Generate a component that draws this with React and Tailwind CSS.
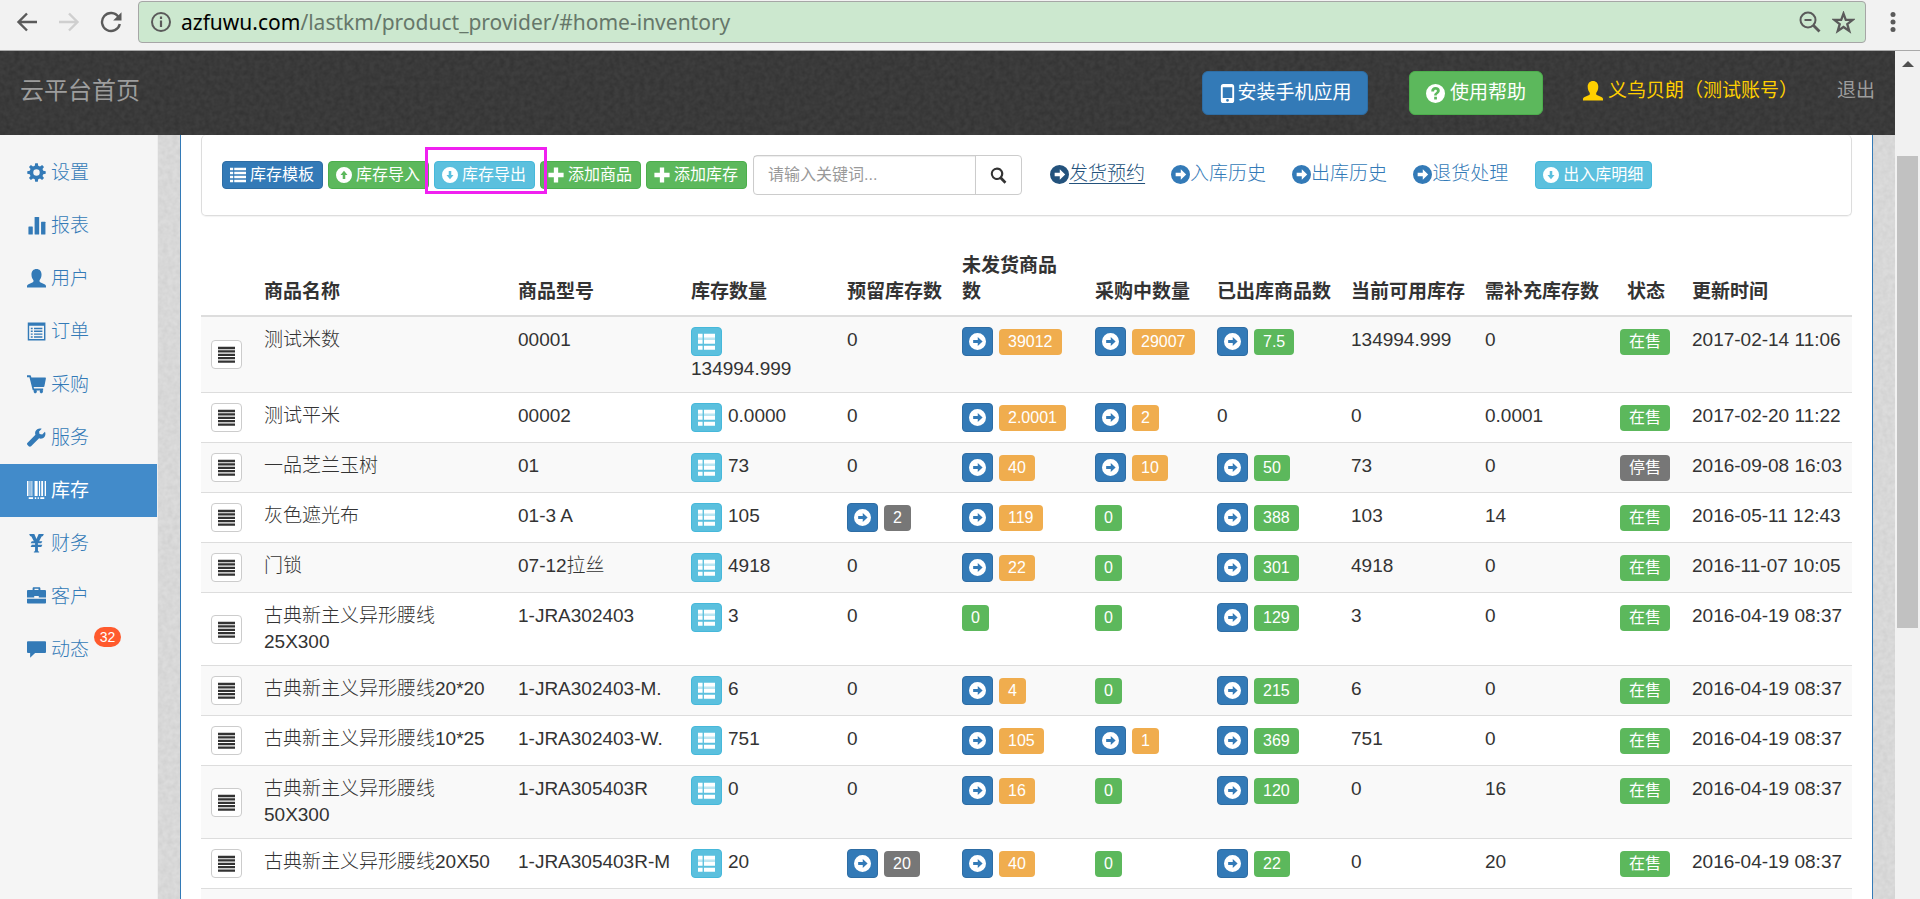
import { clsx } from 'clsx';

const glyphs = {
    cog: (
        <path
            fillRule="evenodd"
            d="M8.6 0.3h2.800l.4 2.600 1.900.8 2.200-1.600 2 2-1.600 2.200.8 1.900 2.600.4v2.800l-2.600.4-.8 1.900 1.600 2.200-2 2-2.200-1.600-1.900.8-.4 2.600H8.600l-.4-2.600-1.900-.8-2.200 1.600-2-2 1.600-2.200-.8-1.900L.3 11.400V8.600l2.600-.4.8-1.900L2.100 4.100l2-2 2.200 1.600 1.900-.8zM10 6.600a3.400 3.400 0 1 0 0 6.800 3.400 3.400 0 0 0 0-6.800z"
        />
    ),
    stats: (
        <>
            <rect x="1.500" y="11" width="4.600" height="8.500" rx=".6" />
            <rect x="8" y="1" width="4.800" height="18.500" rx=".6" />
            <rect x="14.800" y="6" width="4.600" height="13.500" rx=".6" />
        </>
    ),
    user: (
        <path d="M10 0c3.200 0 5.300 2.300 5.300 5.800 0 2.500-.8 4.600-2.100 6.100v1c0 .7.4 1 1.200 1.400l4 1.800c1.200.6 1.600 1.200 1.600 2.200v1.200H0v-1.200c0-1 .4-1.600 1.600-2.200l4-1.800c.8-.4 1.200-.7 1.200-1.400v-1C5.500 10.400 4.700 8.300 4.700 5.800 4.700 2.300 6.800 0 10 0z" />
    ),
    listAlt: (
        <>
            <path fillRule="evenodd" d="M.8.600h18.600v18.800H.800zM2.300 4v13.900h15.600V4z" />
            <path d="M4 6h2v1.500H4zM7.400 6h8.800v1.500H7.400zM4 9h2v1.500H4zM7.400 9h8.800v1.500H7.400zM4 12h2v1.500H4zM7.400 12h8.800v1.500H7.400zM4 15h2v1.500H4zM7.400 15h8.800v1.500H7.400z" />
        </>
    ),
    cart: (
        <path d="M0 .3h3.300c.5 0 .8.3.9.800l.4 1.600h14.600c.5 0 .8.400.7.900l-1.600 8.200c-.1.500-.4.700-.9.700H7l.4 1.800H17v2h-.6a1.700 1.700 0 1 1-2.600 0H10a1.700 1.700 0 1 1-2.600 0h-.6c-.5 0-.8-.3-.9-.8L2.600 2.300H0z" />
    ),
    wrench: (
        <path d="M18.900 3.900l-2.900 2.900-2.800-.5-.5-2.600L15.500.800C12.900-.100 10 .900 8.900 3.500c-.5 1.300-.5 2.600 0 3.700L.600 15.500a1.800 1.800 0 0 0 0 2.500l1.200 1.200c.7.700 1.800.700 2.500 0l8.400-8.300c1.300.5 2.700.4 4-.2 2.500-1.200 3.300-4.300 2.200-6.800z" />
    ),
    barcode: (
        <path d="M0 0h1.600v15.800H0zM2.700 0h.9v15.800h-.9zM4.700 0h.9v15.800h-.9zM8 0h3.200v15.800H8zM12.600 0h1.200v15.800h-1.200zM15 0h1.900v15.800H15zM18.600 0H20v15.800h-1.400zM1.800 17.200h4.600V19H1.800zM8.200 17.200h1.500V19H8.200zM11.200 17.200h1.300V19h-1.300zM14 17.200h4.200V19H14z" />
    ),
    yen: (
        <path d="M2.300 0h5.400L10 5.200 12.300 0h5.400l-.9 2.200-1.400.5-2.600 4.800h3.400l-1.200 2.200h-3.500v1.700h4.700l-1.200 2.200h-3.500V17c0 1 .4 1.300 1.300 1.600v.9H7.200v-.9c.9-.3 1.300-.6 1.300-1.600v-3.400H3.800L5 11.400h3.500V9.700H3.800L5 7.500h2.200L4.600 2.700l-1.400-.5z" />
    ),
    briefcase: (
        <path
            fillRule="evenodd"
            d="M7.200.300h5.600c.8 0 1.300.5 1.300 1.200v1.600h4.700c.7 0 1.200.5 1.200 1.200v6.700h-7.600V9.400H7.600V11H0V4.300c0-.7.5-1.200 1.200-1.200h4.700V1.500c0-.7.5-1.200 1.300-1.200zM7.900 1.800v1.300h4.200V1.800zM0 12.400h20v3.800c0 .7-.5 1.200-1.200 1.200H1.200c-.7 0-1.200-.5-1.200-1.200z"
        />
    ),
    comment: (
        <path d="M1 1.200h18c.6 0 1 .4 1 1v10.500c0 .6-.4 1-1 1H8.500L3.300 18.800v-5.100H1c-.6 0-1-.4-1-1V2.200c0-.6.4-1 1-1z" />
    ),
    phone: (
        <path
            fillRule="evenodd"
            d="M5.500 0h9c1.500 0 2.500 1 2.500 2.500v15c0 1.500-1 2.500-2.500 2.500h-9C4 20 3 19 3 17.500v-15C3 1 4 0 5.500 0zM5 3.500v11.200h10V3.500zm5 12.200a1.500 1.500 0 1 0 0 3 1.500 1.500 0 0 0 0-3z"
        />
    ),
    question: (
        <path
            fillRule="evenodd"
            d="M10 0a10 10 0 1 1 0 20 10 10 0 0 1 0-20zM8.600 13.400v3h2.900v-3zM5.500 7.900h3c0-1.200.5-1.900 1.500-1.900s1.500.5 1.500 1.200c0 .8-.4 1.200-1.200 1.700-1.300.9-1.700 1.700-1.700 3.300h2.700c0-1 .4-1.400 1.300-2 1.300-.9 1.900-1.800 1.900-3.300 0-2.300-1.700-3.700-4.400-3.700-2.800 0-4.600 1.700-4.600 4.700z"
        />
    ),
    right: (
        <path
            fillRule="evenodd"
            d="M10 0a10 10 0 1 1 0 20 10 10 0 0 1 0-20zM10.300 4.600v3.500H4.900v3.800h5.400v3.500L16 10z"
        />
    ),
    down: (
        <path
            fillRule="evenodd"
            d="M10 0a10 10 0 1 1 0 20 10 10 0 0 1 0-20zM8.400 4.900v5H5.600L10 15.400l4.400-5.500h-2.800v-5z"
        />
    ),
    up: (
        <path
            fillRule="evenodd"
            d="M10 0a10 10 0 1 1 0 20 10 10 0 0 1 0-20zM8.400 15.100v-5H5.600L10 4.600l4.400 5.500h-2.800v5z"
        />
    ),
    plus: <path d="M7.300.500h5.400v6.800h6.800v5.400h-6.800v6.800H7.300v-6.800H.500V7.300h6.800z" />,
    list: (
        <path d="M0 1h4v3.200H0zM5.300 1H20v3.200H5.300zM0 6h4v3.200H0zM5.300 6H20v3.200H5.300zM0 11h4v3.200H0zM5.300 11H20v3.200H5.300zM0 16h4v3.200H0zM5.300 16H20v3.200H5.300z" />
    ),
    thList: (
        <>
            <path d="M0 1h5.400v4.600H0zM7 1h13v4.600H7zM0 8h5.400v4.600H0zM7 8h13v4.600H7zM0 15h5.400v4.600H0zM7 15h13v4.600H7z" />
            <path d="M0 5.600h5.400V8H0zM7 5.600h13V8H7z" opacity=".6" />
        </>
    ),
    justify: (
        <path d="M0 1h20v2.700H0zM0 5h20v2.700H0zM0 9h20v2.700H0zM0 13h20v2.700H0zM0 17h20v2.700H0z" />
    ),
    search: (
        <path
            fillRule="evenodd"
            d="M8.200.5a7.400 7.400 0 0 1 6.100 11.600l5 5.300-2.200 2.200-5.200-5.200A7.400 7.400 0 1 1 8.200.500zm0 2.600a4.900 4.900 0 1 0 0 9.800 4.900 4.900 0 0 0 0-9.800z"
        />
    ),
};

const Glyph = ({ name, className }) => (
    <svg viewBox="0 0 20 20" fill="currentColor" aria-hidden="true" className={clsx('shrink-0', className)}>
        {glyphs[name]}
    </svg>
);

const menu = [
    { icon: 'cog', label: '设置' },
    { icon: 'stats', label: '报表' },
    { icon: 'user', label: '用户' },
    { icon: 'listAlt', label: '订单' },
    { icon: 'cart', label: '采购' },
    { icon: 'wrench', label: '服务' },
    { icon: 'barcode', label: '库存', active: true },
    { icon: 'yen', label: '财务' },
    { icon: 'briefcase', label: '客户' },
    { icon: 'comment', label: '动态', count: 32 },
];

const columns = [
    { label: '', width: 'w-[53px]' },
    { label: '商品名称', width: 'w-[254px]' },
    { label: '商品型号', width: 'w-[173px]' },
    { label: '库存数量', width: 'w-[156px]' },
    { label: '预留库存数', width: 'w-[115px]' },
    { label: '未发货商品数', width: 'w-[133px]' },
    { label: '采购中数量', width: 'w-[122px]' },
    { label: '已出库商品数', width: 'w-[134px]' },
    { label: '当前可用库存', width: 'w-[134px]' },
    { label: '需补充库存数', width: 'w-[135px]' },
    { label: '状态', width: 'w-[72px]', center: true },
    { label: '更新时间', width: 'w-[170px]' },
];

const rows = [
    { name: '测试米数', model: '00001', stock: '134994.999', reserved: 0, unsent: '39012', buying: '29007', sent: '7.5', usable: '134994.999', need: '0', onSale: true, time: '2017-02-14 11:06' },
    { name: '测试平米', model: '00002', stock: '0.0000', reserved: 0, unsent: '2.0001', buying: '2', sent: null, usable: '0', need: '0.0001', onSale: true, time: '2017-02-20 11:22' },
    { name: '一品芝兰玉树', model: '01', stock: '73', reserved: 0, unsent: '40', buying: '10', sent: '50', usable: '73', need: '0', onSale: false, time: '2016-09-08 16:03' },
    { name: '灰色遮光布', model: '01-3 A', stock: '105', reserved: 2, unsent: '119', buying: '0', sent: '388', usable: '103', need: '14', onSale: true, time: '2016-05-11 12:43' },
    { name: '门锁', model: '07-12拉丝', stock: '4918', reserved: 0, unsent: '22', buying: '0', sent: '301', usable: '4918', need: '0', onSale: true, time: '2016-11-07 10:05' },
    { name: '古典新主义异形腰线25X300', model: '1-JRA302403', stock: '3', reserved: 0, unsent: '0', buying: '0', sent: '129', usable: '3', need: '0', onSale: true, time: '2016-04-19 08:37' },
    { name: '古典新主义异形腰线20*20', model: '1-JRA302403-M.', stock: '6', reserved: 0, unsent: '4', buying: '0', sent: '215', usable: '6', need: '0', onSale: true, time: '2016-04-19 08:37' },
    { name: '古典新主义异形腰线10*25', model: '1-JRA302403-W.', stock: '751', reserved: 0, unsent: '105', buying: '1', sent: '369', usable: '751', need: '0', onSale: true, time: '2016-04-19 08:37' },
    { name: '古典新主义异形腰线50X300', model: '1-JRA305403R', stock: '0', reserved: 0, unsent: '16', buying: '0', sent: '120', usable: '0', need: '16', onSale: true, time: '2016-04-19 08:37' },
    { name: '古典新主义异形腰线20X50', model: '1-JRA305403R-M', stock: '20', reserved: 20, unsent: '40', buying: '0', sent: '22', usable: '0', need: '20', onSale: true, time: '2016-04-19 08:37' },
];

// Paper grain behind the header and the page gutters
const Grain = ({ id, dark }) => (
    <svg className="absolute inset-0 size-full" aria-hidden="true">
        <filter id={id} x="0" y="0" width="100%" height="100%">
            <feTurbulence type="fractalNoise" baseFrequency="0.2" numOctaves="2" seed="4" />
            <feColorMatrix values={dark ? '0 0 0 0 0  0 0 0 0 0  0 0 0 0 0  0.3 0 0 0 -0.08' : '0 0 0 0 0  0 0 0 0 0  0 0 0 0 0  0.08 0 0 0 -0.02'} />
        </filter>
        <rect width="100%" height="100%" filter={`url(#${id})`} />
    </svg>
);

const BrowserBar = () => (
    <div className="flex h-[51px] shrink-0 items-start border-b border-[#a9a9a9] bg-[#f2f2f2] pt-px text-[#5a5a5a]">
        <div className="flex h-[42px] w-[138px] shrink-0 items-center justify-between pr-4 pl-4">
            <button type="button" aria-label="后退">
                <svg viewBox="0 0 22 22" className="size-[22px]" fill="none" stroke="currentColor" strokeWidth="2.400">
                    <path d="M21 11H3M11 2.500L2.500 11l8.500 8.500" />
                </svg>
            </button>
            <button type="button" aria-label="前进" className="text-[#cfcfcf]">
                <svg viewBox="0 0 22 22" className="size-[22px]" fill="none" stroke="currentColor" strokeWidth="2.400">
                    <path d="M1 11h18M11 2.500l8.500 8.500-8.500 8.500" />
                </svg>
            </button>
            <button type="button" aria-label="刷新">
                <svg viewBox="0 0 22 22" className="size-[22px]" fill="none" stroke="currentColor" strokeWidth="2.400">
                    <path d="M18.500 6A9 9 0 1 0 19.800 13" />
                    <path d="M21.500 1.200v8.300h-8.300z" fill="currentColor" stroke="none" />
                </svg>
            </button>
        </div>
        <div className="flex h-[42px] flex-1 items-center rounded-[4px] border border-[#a6a6a6] bg-[#cce8cf] pr-[10px] pl-[11px]">
            <svg viewBox="0 0 22 22" className="size-[22px] shrink-0" fill="none" stroke="currentColor" strokeWidth="2">
                <circle cx="11" cy="11" r="9" />
                <path d="M11 9.500v6.500M11 5.500v2.400" strokeWidth="2.200" />
            </svg>
            <p className="ml-[9px] flex-1 font-['Noto_Sans','Open_Sans',sans-serif] text-[21px] leading-7 font-normal text-[#66776a]">
                <span className="text-black">azfuwu.com</span>/lastkm/product_provider/#home-inventory
            </p>
            <button type="button" aria-label="缩放">
                <svg viewBox="0 0 22 22" className="size-[22px]" fill="none" stroke="currentColor" strokeWidth="2">
                    <circle cx="9" cy="9" r="7.500" />
                    <path d="M5.500 9h7" />
                    <path d="M14.500 14.500l6 6" strokeWidth="2.800" />
                </svg>
            </button>
            <button type="button" aria-label="收藏" className="ml-[11px]">
                <svg viewBox="0 0 22 22" className="size-[23px]" fill="none" stroke="currentColor" strokeWidth="2.200">
                    <path d="M11 2.500l2.200 6h6.600l-5.200 4.100 1.900 6.500-5.500-3.800-5.500 3.800 1.900-6.500L2.200 8.500h6.600z" />
                </svg>
            </button>
        </div>
        <button type="button" aria-label="菜单" className="flex h-[42px] w-[54px] shrink-0 items-center justify-center">
            <svg viewBox="0 0 6 22" className="h-[22px] w-[6px]" fill="currentColor">
                <circle cx="3" cy="3.500" r="2.500" />
                <circle cx="3" cy="11" r="2.500" />
                <circle cx="3" cy="18.500" r="2.500" />
            </svg>
        </button>
    </div>
);

const Header = () => (
    <header className="relative h-[84px] shrink-0 bg-[#3e3e3e] font-normal">
        <Grain id="grain-dark" dark />
        <div className="relative flex items-start pt-5 pr-5 pl-5">
            <a href="#home" className="flex h-10 items-center text-2xl text-[#9d9d9d]">云平台首页</a>
            <button type="button" className="ml-auto flex h-11 w-[166px] items-center justify-center rounded-md border border-[#2e6da4] bg-[#337ab7] text-white">
                <Glyph name="phone" className="size-[19px]" />
                安装手机应用
            </button>
            <button type="button" className="ml-[41px] flex h-11 w-[134px] items-center justify-center gap-[5px] rounded-md border border-[#4cae4c] bg-[#5cb85c] text-white">
                <Glyph name="question" className="size-[19px]" />
                使用帮助
            </button>
            <a href="#account" className="ml-10 flex h-10 items-center gap-[5px] text-[#ffcf00]">
                <Glyph name="user" className="size-5" />
                义乌贝朗（测试账号）
            </a>
            <a href="#logout" className="ml-[39px] flex h-10 items-center text-[#9d9d9d]">退出</a>
        </div>
    </header>
);

const Sidebar = () => (
    <nav className="w-[158px] shrink-0 border-r border-[#eeeeee] bg-[#f5f5f5] pt-[11px]">
        {menu.map((item) => (
            <a
                key={item.icon}
                href={`#${item.icon}`}
                className={clsx(
                    'flex h-[53px] items-center pl-[27px]',
                    item.active ? 'bg-[#428bca] font-normal text-white' : 'text-[#337ab7]'
                )}
            >
                <Glyph name={item.icon} className="mr-[5px] size-[19px]" />
                {item.label}
                {item.count && (
                    <span className="mt-1 ml-[5px] flex h-5 w-[27px] items-center justify-center self-start rounded-full bg-[#ff5a2d] text-sm text-white">
                        {item.count}
                    </span>
                )}
            </a>
        ))}
    </nav>
);

const SmallButton = ({ icon, color, children }) => (
    <button
        type="button"
        className={clsx('flex h-7 shrink-0 items-center gap-1 rounded-[4px] border pr-2 pl-[7px] text-base font-normal text-white', color)}
    >
        <Glyph name={icon} className="size-4" />
        {children}
    </button>
);

const primary = 'border-[#2e6da4] bg-[#337ab7]';
const success = 'border-[#4cae4c] bg-[#5cb85c]';
const info = 'border-[#46b8da] bg-[#5bc0de]';

const Toolbar = () => (
    <div className="flex items-center rounded-[5px] border border-t-0 border-[#dddddd] px-5 py-5 shadow-[0_1px_1px_rgba(0,0,0,0.05)]">
        <div className="flex gap-[5px]">
            <SmallButton icon="list" color={primary}>库存模板</SmallButton>
            <SmallButton icon="up" color={success}>库存导入</SmallButton>
            <div className="relative">
                <SmallButton icon="down" color={info}>库存导出</SmallButton>
                <div className="pointer-events-none absolute -top-[14px] -right-3 -bottom-[5px] -left-[9px] border-3 border-[#f020f0]" />
            </div>
            <SmallButton icon="plus" color={success}>添加商品</SmallButton>
            <SmallButton icon="plus" color={success}>添加库存</SmallButton>
        </div>
        <form className="ml-[6px] flex h-10 w-[269px] shrink-0 rounded-[4px] border border-[#cccccc]">
            <input
                type="text"
                aria-label="关键词"
                placeholder="请输入关键词..."
                className="w-0 flex-1 px-[14px] text-base font-normal shadow-[inset_0_1px_1px_rgba(0,0,0,0.075)] outline-none placeholder:text-[#999999]"
            />
            <button type="button" aria-label="搜索" className="flex w-[46px] items-center justify-center border-l border-[#cccccc]">
                <Glyph name="search" className="size-[17px]" />
            </button>
        </form>
        <div className="ml-7 flex gap-[26px] pb-0.5 text-[#337ab7]">
            <a href="#booking" className="flex items-center text-[#23527c]">
                <Glyph name="right" className="size-[19px]" />
                <span className="underline underline-offset-3">发货预约</span>
            </a>
            {['入库历史', '出库历史', '退货处理'].map((label) => (
                <a key={label} href="#history" className="flex items-center">
                    <Glyph name="right" className="size-[19px]" />
                    {label}
                </a>
            ))}
        </div>
        <div className="ml-[27px]">
            <SmallButton icon="down" color={info}>出入库明细</SmallButton>
        </div>
    </div>
);

const Badge = ({ color, children }) => (
    <span className={clsx('flex h-[26px] items-center rounded-[4px] px-[9px] text-base font-normal text-white', color)}>
        {children}
    </span>
);

const IconButton = ({ icon, color, label }) => (
    <button
        type="button"
        aria-label={label}
        className={clsx('flex h-[29px] w-[31px] shrink-0 items-center justify-center rounded-[4px] border', color)}
    >
        <Glyph name={icon} className="size-[17px]" />
    </button>
);

// Arrow button plus a count; a plain badge when there is nothing to open
const Count = ({ value, color, arrow }) => (
    <div className="flex h-[29px] items-center gap-[6px]">
        {arrow && <IconButton icon="right" color="border-[#2e6da4] bg-[#337ab7] text-white" label="查看" />}
        <Badge color={color}>{value}</Badge>
    </div>
);

const Row = ({ row }) => (
    <tr className="border-b border-[#dddddd] align-top odd:bg-[#f9f9f9]">
        <td className="p-[10px] align-middle">
            <IconButton icon="justify" color="border-[#cccccc] bg-white" label="操作" />
        </td>
        <td className="p-[10px]">{row.name}</td>
        <td className="p-[10px] whitespace-nowrap">{row.model}</td>
        <td className="p-[10px]">
            <div className="flex flex-wrap items-start gap-x-[6px]">
                <IconButton icon="thList" color="border-[#46b8da] bg-[#5bc0de] text-white" label="明细" />
                <span>{row.stock}</span>
            </div>
        </td>
        <td className="p-[10px]">
            {row.reserved ? <Count value={row.reserved} color="bg-[#777777]" arrow /> : '0'}
        </td>
        <td className="p-[10px]">
            <Count value={row.unsent} color={row.unsent === '0' ? 'bg-[#5cb85c]' : 'bg-[#f0ad4e]'} arrow={row.unsent !== '0'} />
        </td>
        <td className="p-[10px]">
            <Count value={row.buying} color={row.buying === '0' ? 'bg-[#5cb85c]' : 'bg-[#f0ad4e]'} arrow={row.buying !== '0'} />
        </td>
        <td className="p-[10px]">
            {row.sent ? <Count value={row.sent} color="bg-[#5cb85c]" arrow /> : '0'}
        </td>
        <td className="p-[10px]">{row.usable}</td>
        <td className="p-[10px]">{row.need}</td>
        <td className="p-[10px]">
            <Count value={row.onSale ? '在售' : '停售'} color={row.onSale ? 'bg-[#5cb85c]' : 'bg-[#777777]'} />
        </td>
        <td className="p-[10px] whitespace-nowrap">{row.time}</td>
    </tr>
);

const InventoryTable = () => (
    <table className="mt-[27px] w-full table-fixed border-collapse">
        <thead>
            <tr className="border-b-2 border-[#dddddd] align-bottom">
                {columns.map((col) => (
                    <th
                        key={col.label}
                        className={clsx('p-[10px] font-bold', col.width, col.center ? 'text-center' : 'text-left')}
                    >
                        {col.label}
                    </th>
                ))}
            </tr>
        </thead>
        <tbody>
            {rows.map((row) => (
                <Row key={row.model} row={row} />
            ))}
            <tr className="h-[50px] odd:bg-[#f9f9f9]">
                <td colSpan={columns.length} />
            </tr>
        </tbody>
    </table>
);

const Scrollbar = () => (
    <div className="flex w-[25px] shrink-0 flex-col items-center bg-[#f1f1f1] pt-[10px]">
        <svg viewBox="0 0 12 6" className="h-[6px] w-3" fill="#505050" aria-hidden="true">
            <path d="M6 0l6 6H0z" />
        </svg>
        <div className="mt-[89px] h-[472px] w-[21px] bg-[#c1c1c1]" />
    </div>
);

const App = () => (
    <div className="flex h-screen flex-col overflow-hidden font-['Liberation_Sans','Noto_Sans_CJK_SC',sans-serif] text-[19px] leading-[26px] font-light text-[#333333]">
        <BrowserBar />
        <div className="flex min-h-0 flex-1">
            <div className="flex min-w-0 flex-1 flex-col">
                <Header />
                <div className="flex min-h-0 flex-1">
                    <Sidebar />
                    <div className="relative min-w-0 flex-1 overflow-hidden bg-[#dcdcdc] px-[22px]">
                        <Grain id="grain-light" />
                        <main className="relative min-h-full border-x border-[#337ab7] bg-white px-5">
                            <Toolbar />
                            <InventoryTable />
                        </main>
                    </div>
                </div>
            </div>
            <Scrollbar />
        </div>
    </div>
);

export default App;
